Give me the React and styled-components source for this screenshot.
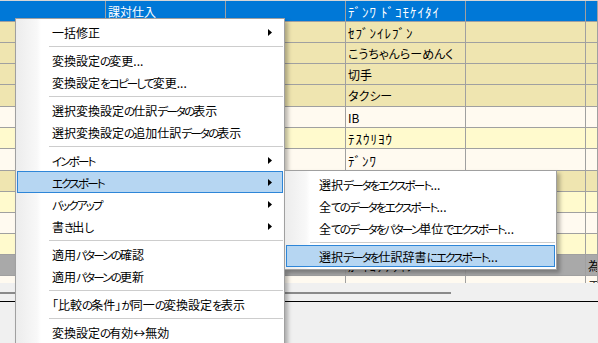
import React from "react";
import styled, { createGlobalStyle, css } from "styled-components";

const GlobalStyle = createGlobalStyle`
  html, body {
    margin: 0;
    padding: 0;
    background: #f0f0f0;
    overflow: hidden;
  }
  body {
    font-family: "Noto Sans CJK JP", "Noto Sans", sans-serif;
    font-size: 12px;
  }
`;

const Screen = styled.div`
  position: relative;
  width: 598px;
  height: 343px;
  overflow: hidden;
  background: #f0f0f0;
`;

const GridViewport = styled.div`
  height: 283px;
  overflow: hidden;
  border-top: 1px solid #d6d6d6;
  box-sizing: border-box;
`;

const tones = {
  selected: "#0078d7",
  tan: "#efe5b0",
  cream: "#fffaf0",
  lemon: "#fffacd",
  grey: "#a9a9a9",
};

const Row = styled.div`
  display: grid;
  grid-template-columns: 106px 120px 120px 120px 120px 1fr;
  height: ${(p) => p.$h}px;
  background: ${(p) => tones[p.$tone]};
  color: ${(p) => (p.$tone === "selected" ? "#ffffff" : "#000000")};
`;

const Cell = styled.div`
  box-sizing: border-box;
  border-right: 1px solid #a0a0a0;
  border-bottom: 1px solid #a0a0a0;
  padding: 1px 0 0 2px;
  display: flex;
  align-items: center;
  white-space: nowrap;
  overflow: hidden;
  line-height: 1;
  font-kerning: none;
  font-size: ${(p) => (p.$half ? 13 : 12)}px;
  letter-spacing: ${(p) => (p.$half ? 1 : 0)}px;
  font-feature-settings: ${(p) => (p.$half ? '"kern" 0' : '"palt"')};
`;

const ScrollStrip = styled.div`
  height: 18px;
  box-sizing: border-box;
  padding-top: 9px;
`;

const ScrollThumb = styled.div`
  width: 451px;
  height: 2px;
  background: #8a8a8a;
`;

const Splitter = styled.div`
  border-top: 1px solid #000;
  height: 41px;
  background: #f0f0f0;
`;

/* ---------- context menus ---------- */

const Menu = styled.div`
  position: absolute;
  left: ${(p) => p.$x}px;
  top: ${(p) => p.$y}px;
  width: ${(p) => p.$w}px;
  ${(p) => p.$h && css`height: ${p.$h}px;`}
  box-sizing: border-box;
  border: 1px solid #a0a0a0;
  padding: 2px 1px;
  background: linear-gradient(
    to right,
    #ececec 0px,
    #f8f8f8 ${(p) => p.$gutter - 4}px,
    #ffffff ${(p) => p.$gutter}px
  );
  box-shadow: 3px 3px 4px rgba(0, 0, 0, 0.28);
  display: flex;
  flex-direction: column;
  font-family: "Noto Sans CJK JP", "Noto Sans", sans-serif;
  font-size: 12px;
  font-feature-settings: "palt";
  color: #000;
`;

const Item = styled.div`
  height: 22px;
  flex: none;
  box-sizing: border-box;
  border: 1px solid transparent;
  display: flex;
  align-items: center;
  padding-left: ${(p) => p.$indent}px;
  padding-right: 10px;
  white-space: nowrap;
  ${(p) =>
    p.$active &&
    css`
      background: #b6d6f2;
      border-color: #2e86d8;
    `}
`;

const Label = styled.span`
  flex: 1;
`;

/* kana in the UI font are set narrower than the kanji */
const Kana = styled.span`
  font-size: 11.5px;
  letter-spacing: -1.8px;
`;

const Separator = styled.div`
  height: 6px;
  flex: none;
  display: flex;
  align-items: center;
  padding-left: ${(p) => p.$indent}px;
  &::after {
    content: "";
    flex: 1;
    height: 1px;
    background: #cdcdcd;
  }
`;

const Arrow = () => (
  <svg width="4" height="7" viewBox="0 0 4 7" aria-hidden="true">
    <polygon points="0,0 4,3.5 0,7" fill="#000" />
  </svg>
);

const KANA_RUN = /([\u3040-\u30ff]+)/;

function UiText({ children }) {
  return children
    .split(KANA_RUN)
    .map((part, i) =>
      i % 2 === 1 ? <Kana key={i}>{part}</Kana> : <React.Fragment key={i}>{part}</React.Fragment>
    );
}

const rows = [
  { tone: "selected", h: 21, cells: ["", "課対仕入", "", "ﾃﾞﾝﾜ ﾄﾞｺﾓｹｲﾀｲ", "", ""] },
  { tone: "tan", h: 21, cells: ["", "", "", "ｾﾌﾞﾝｲﾚﾌﾞﾝ", "", ""] },
  { tone: "tan", h: 21, cells: ["", "", "", "こうちゃんらーめんく", "", ""] },
  { tone: "tan", h: 21, cells: ["", "", "", "切手", "", ""] },
  { tone: "tan", h: 22, cells: ["", "", "", "タクシー", "", ""] },
  { tone: "cream", h: 21, cells: ["", "", "", "IB", "", ""] },
  { tone: "lemon", h: 21, cells: ["", "", "", "ﾃｽｳﾘﾖｳ", "", ""] },
  { tone: "cream", h: 22, cells: ["", "", "", "ﾃﾞﾝﾜ", "", ""] },
  { tone: "tan", h: 21, cells: ["", "", "", "", "", ""] },
  { tone: "lemon", h: 21, cells: ["", "", "", "", "", ""] },
  { tone: "cream", h: 21, cells: ["", "", "", "", "", ""] },
  { tone: "lemon", h: 21, cells: ["", "", "", "", "", ""] },
  { tone: "grey", h: 21, cells: ["", "", "", "ｶﾞｲｺｸｿｳｷﾝ", "", "為"] },
  { tone: "cream", h: 21, cells: ["", "", "", "NTT", "", "電"] },
];

const isHalfWidth = (s) => /[\uFF61-\uFF9F]/.test(s);

const mainMenu = [
  { label: "一括修正", sub: true },
  { sep: true },
  { label: "変換設定の変更..." },
  { label: "変換設定をコピーして変更..." },
  { sep: true },
  { label: "選択変換設定の仕訳データの表示" },
  { label: "選択変換設定の追加仕訳データの表示" },
  { sep: true },
  { label: "インポート", sub: true },
  { label: "エクスポート", sub: true, active: true },
  { label: "バックアップ", sub: true },
  { label: "書き出し", sub: true },
  { sep: true },
  { label: "適用パターンの確認" },
  { label: "適用パターンの更新" },
  { sep: true },
  { label: "「比較の条件」が同一の変換設定を表示" },
  { sep: true },
  { label: "変換設定の有効↔無効" },
];

const exportMenu = [
  { label: "選択データをエクスポート..." },
  { label: "全てのデータをエクスポート..." },
  { label: "全てのデータをパターン単位でエクスポート..." },
  { sep: true },
  { label: "選択データを仕訳辞書にエクスポート...", active: true },
];

function MenuList({ items, indent, sepIndent }) {
  return items.map((it, i) =>
    it.sep ? (
      <Separator key={i} $indent={sepIndent} />
    ) : (
      <Item key={i} $indent={indent} $active={it.active}>
        <Label>
          <UiText>{it.label}</UiText>
        </Label>
        {it.sub && <Arrow />}
      </Item>
    )
  );
}

export default function App() {
  return (
    <Screen>
      <GlobalStyle />
      <GridViewport>
        {rows.map((r, i) => (
          <Row key={i} $tone={r.tone} $h={r.h}>
            {r.cells.map((c, j) => (
              <Cell key={j} $half={isHalfWidth(c)}>
                {c}
              </Cell>
            ))}
          </Row>
        ))}
      </GridViewport>
      <ScrollStrip>
        <ScrollThumb />
      </ScrollStrip>
      <Splitter />

      <Menu $x={15} $y={18} $w={270} $h={360} $gutter={25}>
        <MenuList items={mainMenu} indent={34} sepIndent={32} />
      </Menu>
      <Menu $x={284} $y={170} $w={273} $gutter={25}>
        <MenuList items={exportMenu} indent={32} sepIndent={24} />
      </Menu>
    </Screen>
  );
}
